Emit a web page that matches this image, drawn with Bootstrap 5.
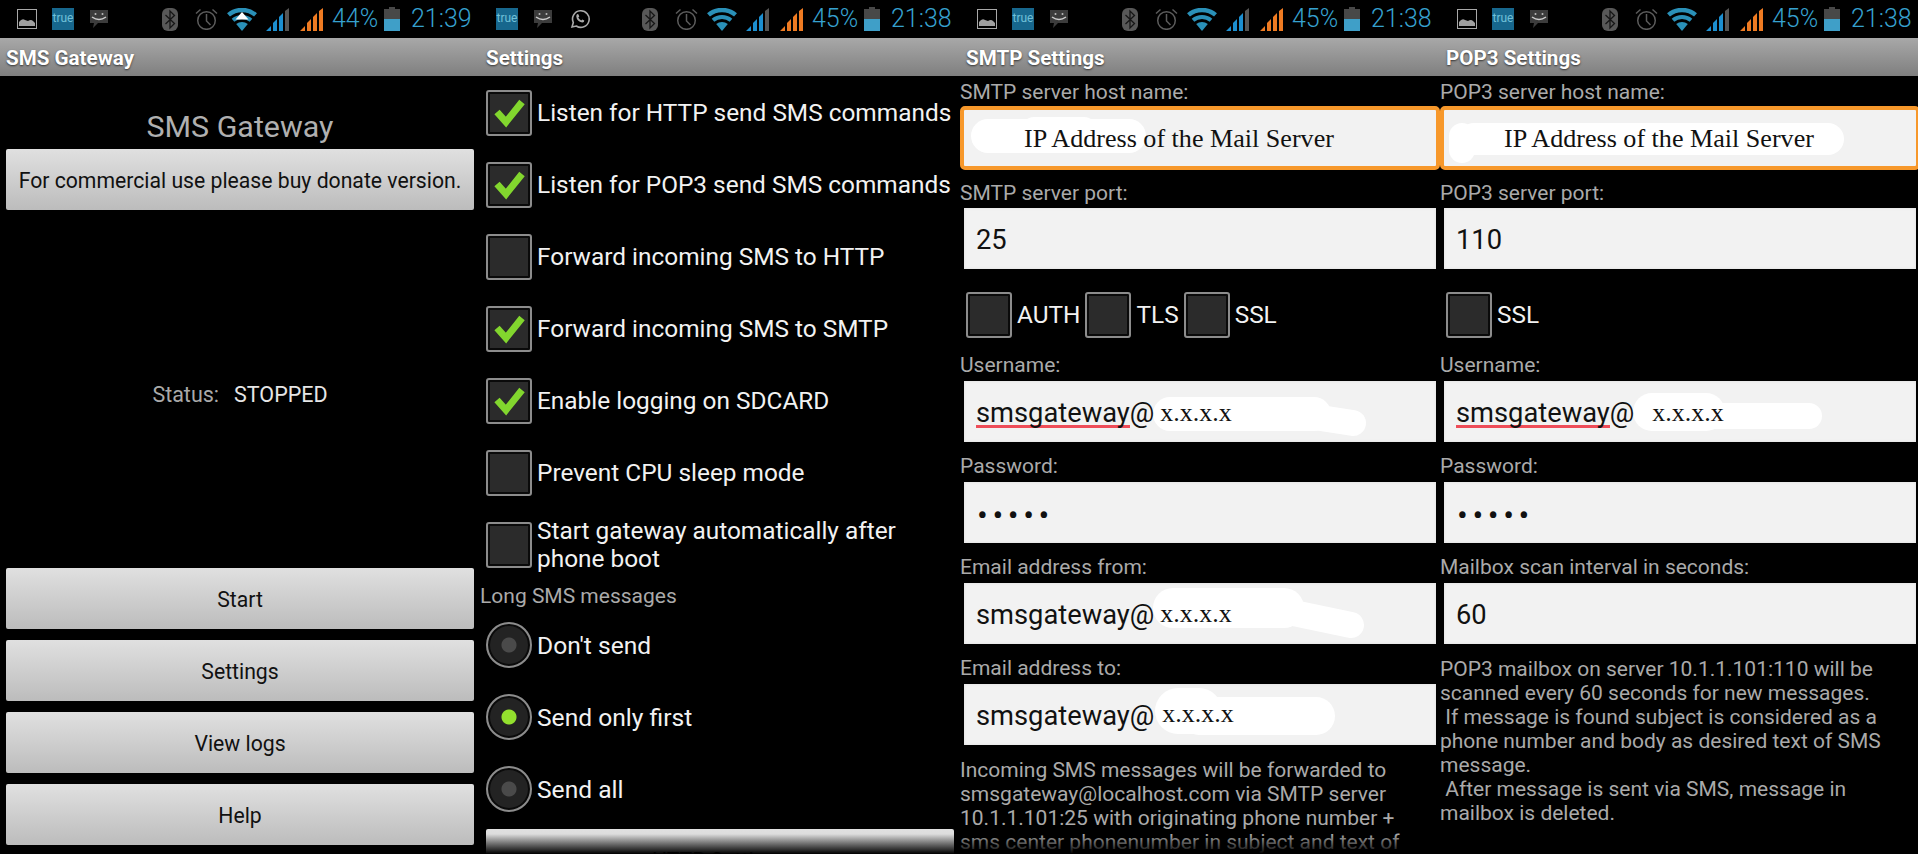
<!DOCTYPE html>
<html lang="en">
<head>
<meta charset="utf-8">
<title>SMS Gateway screenshots</title>
<link href="https://cdn.jsdelivr.net/npm/bootstrap@5.3.0/dist/css/bootstrap.min.css" rel="stylesheet">
<style>
html,body{height:854px;overflow:hidden;background:#000}
body{font-family:Roboto,"Liberation Sans",sans-serif;width:1918px}
.phone{flex:0 0 480px;width:480px;height:854px;overflow:hidden;position:relative;background:#000}
.sbar{height:38px;padding-left:17px}
.sbar svg{display:block;flex:none}
.sb-group{margin-left:auto;padding-right:9px}
.true-ico{width:22px;height:22px;background:#17678d;color:#6fc0d8;font-size:12px;line-height:20px;text-align:center;flex:none}
.sb-txt{color:#36a1cf;font-size:25px;font-weight:300;line-height:38px;white-space:nowrap}
.sb-pct{width:44px;margin-right:8px;text-align:right}
.sb-time{width:60px;text-align:right}
.tbar{height:38px;background:linear-gradient(#a8a8a8,#7f7f7f);color:#fff;font-weight:700;font-size:20.600px;line-height:40px;padding-left:6px;text-shadow:0 1px 2px #333}
.hdg{color:#b0b0b0;font-size:30.400px;line-height:36px;margin:33px 0 4px;text-align:center}
.btn.dbtn{display:block;width:468px;height:61px;margin:0 6px;padding:0;background:linear-gradient(#e0e0e0,#bcbcbc);border:0;border-radius:2px;color:#111;font-size:21.200px;line-height:63px;text-align:center}
.main-col{height:778px;padding-bottom:9px}
.btn-stack{gap:11px}
.stat{flex:1;color:#aaa;font-size:21.500px;padding-top:12px;gap:15px}
.stat b{font-weight:400;color:#e6e6e6}
.opts{padding-top:14px}
.form-check.opt{display:flex;align-items:center;min-height:46px;padding:0;margin:0 0 26px 6px}
.form-check.opt.inl{margin:0}
.form-check-input.dchk{float:none;flex:none;width:46px;height:46px;margin:0;background-color:#2b2b2b;border:2px solid #8c8c8c;border-radius:3px;box-shadow:inset 0 0 0 2px #0a0a0a}
.form-check-input.dchk:checked{background-color:#2b2b2b;border-color:#8c8c8c;background-size:46px 46px;background-position:center;--bs-form-check-bg-image:url("data:image/svg+xml,%3Csvg xmlns='http://www.w3.org/2000/svg' viewBox='0 0 46 46'%3E%3Cpath d='M11 22l9 10L36 12' fill='none' stroke='%2382d62e' stroke-width='7'/%3E%3C/svg%3E")}
.form-check-input.drad{float:none;flex:none;width:46px;height:46px;margin:0;border:2px solid #8c8c8c;border-radius:50%;background-color:#232323;background-image:radial-gradient(circle,#4a4a4a 0 7px,transparent 8px);box-shadow:inset 0 0 0 2px #0a0a0a}
.form-check-input.drad:checked{background-color:#232323;border-color:#8c8c8c;background-image:radial-gradient(circle,#93e02e 0 7px,transparent 8px)}
.form-check-label.dlab{color:#f2f2f2;font-size:24.400px;line-height:28px;margin-left:5px;white-space:nowrap}
.form-check-label.dlab.rlab{font-size:24.600px;padding-top:2px}
.form-check-label.dlab.two-line{margin-block:-5px}
.sect{color:#aaa;font-size:21px;line-height:24px;margin:-10px 0 14px}
.fade-bot{position:absolute;left:0;right:0;bottom:0;height:20px;background:linear-gradient(rgba(0,0,0,0),#000)}
.fl{color:#aaa;font-size:21px;line-height:24px;margin:12px 0 4px;white-space:nowrap}
.fl.first{margin:4px 0 2px}
.fl.second{margin:11px 0 3px}
.form-control.fld{position:relative;width:472px;height:61px;margin:0 4px;padding:0 0 0 12px;background:#f2f2f2;border:0;border-radius:0;box-shadow:inset 0 0 3px #ddd;color:#111;font-size:27.300px;line-height:65px;white-space:nowrap}
.form-control.fld.foc{width:480px;height:64px;margin:0;padding-left:60px;border:4px solid #f7982b;border-radius:5px;font-family:"Liberation Serif",serif;font-size:26.100px;line-height:58px;box-shadow:none}
.scrib{position:absolute;left:0;top:0;width:100%;height:100%;pointer-events:none}
.scrib path{fill:none;stroke:#fff;stroke-linecap:round}
.fld span{position:relative}
.serif{font-family:"Liberation Serif",serif;font-size:26px;margin-left:6px;top:-1px}
.serif.s-to{margin-left:8px;top:-3px}
.serif.s-from{top:-2px}
.serif.s-pop{margin-left:18px}
.redl{position:absolute;left:12px;top:44px;width:154px;height:3px;background:#ee4d59}
.form-control.fld.pwd{font-size:32px;letter-spacing:4.600px;line-height:67px;padding-left:13px}
.cks{margin:23px 0 15px;padding-left:6px;height:46px}
.cks .form-check.opt+.form-check.opt{margin-left:5px}
.help{color:#aaa;font-size:21px;line-height:24px;margin:13px 0 0;white-space:nowrap}
</style>
</head>
<body>
<svg width="0" height="0" class="position-absolute">
<defs>
<symbol id="i-img" viewBox="0 0 20 20"><rect x=".5" y=".5" width="19" height="19" fill="none" stroke="#a8a8a8"/><path d="M2 17v-4q3-4 6-2l3 1q3-2 5 0l2 2v3z" fill="#a0a0a0"/></symbol>
<symbol id="i-msg" viewBox="0 0 20 20"><path d="M1 1h18v13H9l-5 5 1-5H1z" fill="#3c3c3c"/><circle cx="6.500" cy="5" r="1" fill="#bbb"/><circle cx="13.500" cy="5" r="1" fill="#bbb"/><path d="M3 8q7 5 14 0" fill="none" stroke="#ccc" stroke-width="1.500"/></symbol>
<symbol id="i-wa" viewBox="0 0 20 20"><path d="M2 18l1.300-4.500A8.300 8.300 0 1 1 6.300 17z" fill="none" stroke="#aaa" stroke-width="1.600"/><path d="M6.500 6q1-1.500 2-.500l.8 2-1 1q1 2 3 3l1-1 2 1q0 2-2 2-5.500-1-6-6z" fill="#aaa"/></symbol>
<symbol id="i-bt" viewBox="0 0 16 23"><rect width="16" height="23" rx="6" fill="#585858"/><path d="M3.500 7l9 8.500L8 20V3l4.500 4.500-9 8.500" fill="none" stroke="#161616" stroke-width="1.300"/></symbol>
<symbol id="i-al" viewBox="0 0 23 22"><circle cx="11.500" cy="12.500" r="8.800" fill="none" stroke="#5c5c5c" stroke-width="1.500"/><path d="M11.500 6v7l4 4M1 5.500L5.500 1.500M22 5.500L17.500 1.500" fill="none" stroke="#5c5c5c" stroke-width="1.500"/></symbol>
<symbol id="i-wf" viewBox="0 0 30 23"><g fill="none" stroke="#2a90b8"><path d="M1.500 6.900A21 21 0 0 1 28.500 6.900" stroke-width="4.500"/><path d="M6 12.300A14 14 0 0 1 24 12.300" stroke-width="4"/></g><path d="M15 23L9.200 16.100A9 9 0 0 1 20.800 16.100Z" fill="#2a90b8"/></symbol>
<symbol id="i-wt" viewBox="0 0 30 23"><g fill="none" stroke="#2a90b8"><path d="M1.500 6.900A21 21 0 0 1 28.500 6.900" stroke-width="4.500"/><path d="M6 12.300A14 14 0 0 1 24 12.300" stroke-width="4"/></g><path d="M15 23L9.200 16.100A9 9 0 0 1 20.800 16.100Z" fill="#2a90b8"/><path d="M15 4l6.500 7.500h-13z" fill="#fff"/></symbol>
<symbol id="i-s1" viewBox="0 0 24 23"><path d="M0 23l5-5v5zM7 23v-8l4-4v12zM13 23V9l4-4v18z" fill="#1c8fd0"/><path d="M19 23V3l4-3v23z" fill="#555"/></symbol>
<symbol id="i-s2" viewBox="0 0 24 23"><path d="M0 23l5-5v5zM7 23v-8l4-4v12zM13 23V9l4-4v18zM19 23V3l4-3v23z" fill="#ef7b22"/></symbol>
<symbol id="i-bat" viewBox="0 0 16 24"><path d="M5 0h6v2h5v10H0V2h5z" fill="#484848"/><path d="M0 12h16v12H0z" fill="#3f9fc8"/></symbol>
</defs>
</svg>

<div class="d-flex">

<section class="phone">
  <div class="sbar d-flex align-items-center">
    <svg width="20" height="20" style="margin-right:15px"><use href="#i-img"/></svg>
    <span class="true-ico" style="margin-right:15px">true</span>
    <svg width="20" height="20"><use href="#i-msg"/></svg>
    <div class="sb-group d-flex align-items-center">
      <svg width="16" height="23" style="margin-right:17px"><use href="#i-bt"/></svg>
      <svg width="23" height="22" style="margin-right:9px"><use href="#i-al"/></svg>
      <svg width="30" height="23" style="margin-right:9px"><use href="#i-wt"/></svg>
      <svg width="24" height="23" style="margin-right:10px"><use href="#i-s1"/></svg>
      <svg width="24" height="23" style="margin-right:8px"><use href="#i-s2"/></svg>
      <span class="sb-txt sb-pct">44%</span>
      <svg width="16" height="24" style="margin-right:11px"><use href="#i-bat"/></svg>
      <span class="sb-txt sb-time">21:39</span>
    </div>
  </div>
  <div class="tbar">SMS Gateway</div>
  <div class="main-col d-flex flex-column">
    <div class="hdg">SMS Gateway</div>
    <button class="btn dbtn" type="button">For commercial use please buy donate version.</button>
    <div class="stat d-flex align-items-center justify-content-center"><span>Status:</span><b>STOPPED</b></div>
    <div class="btn-stack d-flex flex-column">
      <button class="btn dbtn" type="button">Start</button>
      <button class="btn dbtn" type="button">Settings</button>
      <button class="btn dbtn" type="button">View logs</button>
      <button class="btn dbtn" type="button">Help</button>
    </div>
  </div>
</section>

<section class="phone">
  <div class="sbar d-flex align-items-center">
    <span class="true-ico" style="margin-right:15px;margin-left:-1px">true</span>
    <svg width="20" height="20" style="margin-right:17px"><use href="#i-msg"/></svg>
    <svg width="20" height="20"><use href="#i-wa"/></svg>
    <div class="sb-group d-flex align-items-center">
      <svg width="16" height="23" style="margin-right:17px"><use href="#i-bt"/></svg>
      <svg width="23" height="22" style="margin-right:9px"><use href="#i-al"/></svg>
      <svg width="30" height="23" style="margin-right:9px"><use href="#i-wf"/></svg>
      <svg width="24" height="23" style="margin-right:10px"><use href="#i-s1"/></svg>
      <svg width="24" height="23" style="margin-right:8px"><use href="#i-s2"/></svg>
      <span class="sb-txt sb-pct">45%</span>
      <svg width="16" height="24" style="margin-right:11px"><use href="#i-bat"/></svg>
      <span class="sb-txt sb-time">21:38</span>
    </div>
  </div>
  <div class="tbar">Settings</div>
  <div class="opts">
    <div class="form-check opt"><input class="form-check-input dchk" type="checkbox" checked><label class="form-check-label dlab">Listen for HTTP send SMS commands</label></div>
    <div class="form-check opt"><input class="form-check-input dchk" type="checkbox" checked><label class="form-check-label dlab">Listen for POP3 send SMS commands</label></div>
    <div class="form-check opt"><input class="form-check-input dchk" type="checkbox"><label class="form-check-label dlab">Forward incoming SMS to HTTP</label></div>
    <div class="form-check opt"><input class="form-check-input dchk" type="checkbox" checked><label class="form-check-label dlab">Forward incoming SMS to SMTP</label></div>
    <div class="form-check opt"><input class="form-check-input dchk" type="checkbox" checked><label class="form-check-label dlab">Enable logging on SDCARD</label></div>
    <div class="form-check opt"><input class="form-check-input dchk" type="checkbox"><label class="form-check-label dlab">Prevent CPU sleep mode</label></div>
    <div class="form-check opt"><input class="form-check-input dchk" type="checkbox"><label class="form-check-label dlab two-line">Start gateway automatically after<br>phone boot</label></div>
    <div class="sect">Long SMS messages</div>
    <div class="form-check opt"><input class="form-check-input drad" type="radio" name="l"><label class="form-check-label dlab rlab">Don't send</label></div>
    <div class="form-check opt"><input class="form-check-input drad" type="radio" name="l" checked><label class="form-check-label dlab rlab">Send only first</label></div>
    <div class="form-check opt" style="margin-bottom:17px"><input class="form-check-input drad" type="radio" name="l"><label class="form-check-label dlab rlab">Send all</label></div>
    <button class="btn dbtn" type="button">HTTP Settings</button>
  </div>
  <div class="fade-bot"></div>
</section>

<section class="phone">
  <div class="sbar d-flex align-items-center">
    <svg width="20" height="20" style="margin-right:15px"><use href="#i-img"/></svg>
    <span class="true-ico" style="margin-right:15px">true</span>
    <svg width="20" height="20"><use href="#i-msg"/></svg>
    <div class="sb-group d-flex align-items-center">
      <svg width="16" height="23" style="margin-right:17px"><use href="#i-bt"/></svg>
      <svg width="23" height="22" style="margin-right:9px"><use href="#i-al"/></svg>
      <svg width="30" height="23" style="margin-right:9px"><use href="#i-wf"/></svg>
      <svg width="24" height="23" style="margin-right:10px"><use href="#i-s1"/></svg>
      <svg width="24" height="23" style="margin-right:8px"><use href="#i-s2"/></svg>
      <span class="sb-txt sb-pct">45%</span>
      <svg width="16" height="24" style="margin-right:11px"><use href="#i-bat"/></svg>
      <span class="sb-txt sb-time">21:38</span>
    </div>
  </div>
  <div class="tbar">SMTP Settings</div>
  <div class="fl first">SMTP server host name:</div>
  <div class="form-control fld foc"><svg class="scrib"><path d="M24 26H165" stroke-width="34"/><path d="M70 20H120" stroke-width="26"/></svg><span>IP Address of the Mail Server</span></div>
  <div class="fl second">SMTP server port:</div>
  <div class="form-control fld">25</div>
  <div class="cks d-flex">
    <div class="form-check opt inl"><input class="form-check-input dchk" type="checkbox"><label class="form-check-label dlab">AUTH</label></div>
    <div class="form-check opt inl"><input class="form-check-input dchk" type="checkbox"><label class="form-check-label dlab">TLS</label></div>
    <div class="form-check opt inl"><input class="form-check-input dchk" type="checkbox"><label class="form-check-label dlab">SSL</label></div>
  </div>
  <div class="fl">Username:</div>
  <div class="form-control fld"><i class="redl"></i><svg class="scrib"><path d="M206 33H350" stroke-width="34"/><path d="M350 36L389 42" stroke-width="26"/></svg><span>smsgateway@<span class="serif">x.x.x.x</span></span></div>
  <div class="fl">Password:</div>
  <div class="form-control fld pwd">•••••</div>
  <div class="fl">Email address from:</div>
  <div class="form-control fld"><svg class="scrib"><path d="M209 25H320" stroke-width="40"/><path d="M320 28L387 42" stroke-width="26"/></svg><span>smsgateway@<span class="serif s-from">x.x.x.x</span></span></div>
  <div class="fl">Email address to:</div>
  <div class="form-control fld"><svg class="scrib"><path d="M214 27H235" stroke-width="46"/><path d="M235 32H352" stroke-width="38"/></svg><span>smsgateway@<span class="serif s-to">x.x.x.x</span></span></div>
  <p class="help">Incoming SMS messages will be forwarded to<br>smsgateway@localhost.com via SMTP server<br>10.1.1.101:25 with originating phone number +<br>sms center phonenumber in subject and text of</p>
  <div class="fade-bot"></div>
</section>

<section class="phone">
  <div class="sbar d-flex align-items-center">
    <svg width="20" height="20" style="margin-right:15px"><use href="#i-img"/></svg>
    <span class="true-ico" style="margin-right:15px">true</span>
    <svg width="20" height="20"><use href="#i-msg"/></svg>
    <div class="sb-group d-flex align-items-center">
      <svg width="16" height="23" style="margin-right:17px"><use href="#i-bt"/></svg>
      <svg width="23" height="22" style="margin-right:9px"><use href="#i-al"/></svg>
      <svg width="30" height="23" style="margin-right:9px"><use href="#i-wf"/></svg>
      <svg width="24" height="23" style="margin-right:10px"><use href="#i-s1"/></svg>
      <svg width="24" height="23" style="margin-right:8px"><use href="#i-s2"/></svg>
      <span class="sb-txt sb-pct">45%</span>
      <svg width="16" height="24" style="margin-right:11px"><use href="#i-bat"/></svg>
      <span class="sb-txt sb-time">21:38</span>
    </div>
  </div>
  <div class="tbar">POP3 Settings</div>
  <div class="fl first">POP3 server host name:</div>
  <div class="form-control fld foc"><svg class="scrib"><path d="M18 26V40" stroke-width="26"/><path d="M30 29H384" stroke-width="32"/></svg><span>IP Address of the Mail Server</span></div>
  <div class="fl second">POP3 server port:</div>
  <div class="form-control fld">110</div>
  <div class="cks d-flex">
    <div class="form-check opt inl"><input class="form-check-input dchk" type="checkbox"><label class="form-check-label dlab">SSL</label></div>
  </div>
  <div class="fl">Username:</div>
  <div class="form-control fld"><i class="redl"></i><svg class="scrib"><path d="M208 31H262" stroke-width="38"/><path d="M262 35H365" stroke-width="26"/></svg><span>smsgateway@<span class="serif s-pop">x.x.x.x</span></span></div>
  <div class="fl">Password:</div>
  <div class="form-control fld pwd">•••••</div>
  <div class="fl">Mailbox scan interval in seconds:</div>
  <div class="form-control fld">60</div>
  <p class="help">POP3 mailbox on server 10.1.1.101:110 will be<br>scanned every 60 seconds for new messages.<br>&nbsp;If message is found subject is considered as a<br>phone number and body as desired text of SMS<br>message.<br>&nbsp;After message is sent via SMS, message in<br>mailbox is deleted.</p>
</section>

</div>
<script src="https://cdn.jsdelivr.net/npm/bootstrap@5.3.0/dist/js/bootstrap.bundle.min.js"></script>
</body>
</html>
